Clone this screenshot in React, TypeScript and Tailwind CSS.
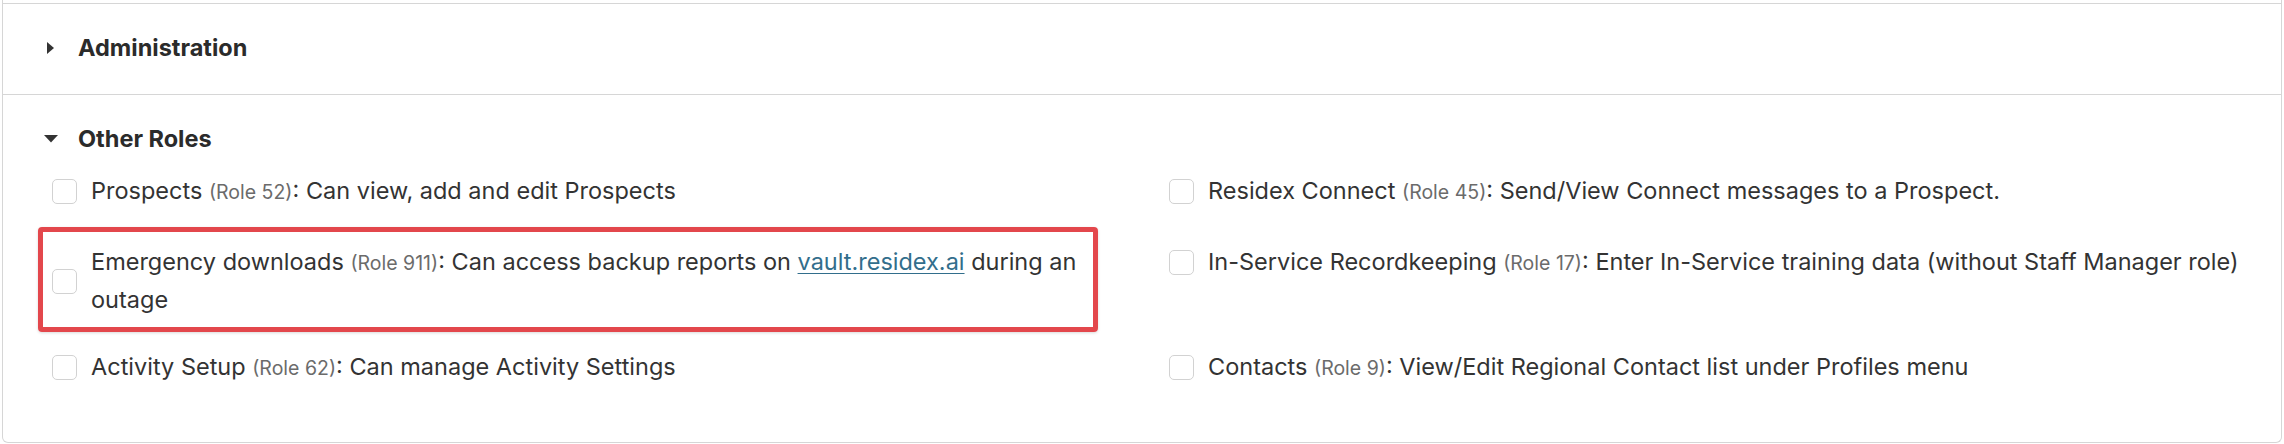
import React from 'react';

type Role = {
  name: string;
  role: number;
  desc: React.ReactNode;
  highlight?: boolean;
};

const left: Role[] = [
  { name: 'Prospects', role: 52, desc: 'Can view, add and edit Prospects' },
  {
    name: 'Emergency downloads',
    role: 911,
    highlight: true,
    desc: (
      <>
        Can access backup reports on{' '}
        <a href="#" className="text-[#326e8c] underline underline-offset-[3px] decoration-1">
          vault.residex.ai
        </a>{' '}
        during an outage
      </>
    ),
  },
  { name: 'Activity Setup', role: 62, desc: 'Can manage Activity Settings' },
];

const right: Role[] = [
  { name: 'Residex Connect', role: 45, desc: 'Send/View Connect messages to a Prospect.' },
  {
    name: 'In-Service Recordkeeping',
    role: 17,
    desc: 'Enter In-Service training data (without Staff Manager role)',
  },
  { name: 'Contacts', role: 9, desc: 'View/Edit Regional Contact list under Profiles menu' },
];

function RoleItem({ item }: { item: Role }) {
  return (
    <label className="relative flex items-center gap-[14px]">
      <span className="h-[25px] w-[25px] shrink-0 rounded-[5px] border border-[#d2d2d2] bg-white" />
      <span className="text-[23.5px] leading-[38px] text-[#333333]">
        {item.name}{' '}
        <span className="text-[19.5px] leading-none text-[#6b6b6b]">(Role {item.role})</span>: {item.desc}
      </span>
      {item.highlight && (
        <span className="pointer-events-none absolute -left-[14px] right-[17px] -top-[16px] -bottom-[13px] rounded-[4px] border-[5px] border-[#e3474c] shadow-[0_1px_3px_rgba(0,0,0,0.15)]" />
      )}
    </label>
  );
}

function Caret({ open }: { open: boolean }) {
  return open ? (
    <svg width="14" height="8" viewBox="0 0 14 8" className="shrink-0">
      <path d="M0 0 L14 0 L7 7.5 Z" fill="#333" />
    </svg>
  ) : (
    <svg width="14" height="12" viewBox="0 0 14 12" className="shrink-0">
      <path d="M3 0 L10 6 L3 12 Z" fill="#333" />
    </svg>
  );
}

export default function App() {
  const rows = left.map((l, i) => [l, right[i]]);

  return (
    <div className="min-h-screen bg-white px-[2px]" style={{ fontFamily: 'Inter, "Noto Sans", sans-serif' }}>
      <div className="rounded-b-[6px] border-x border-b border-[#d6d6d6]">
        <div className="h-[3px]" />

        <section className="border-t border-[#d6d6d6] pt-[28px] pb-[30px] pl-[41px]">
          <div className="flex h-[32px] items-center gap-[20px]">
            <Caret open={false} />
            <h2 className="text-[23.5px] font-bold text-[#2b2b2b]">Administration</h2>
          </div>
        </section>

        <section className="border-t border-[#d6d6d6] pt-[28px] pb-[56px]">
          <div className="flex h-[32px] items-center gap-[20px] pl-[41px]">
            <Caret open={true} />
            <h2 className="text-[23.5px] font-bold text-[#2b2b2b]">Other Roles</h2>
          </div>

          <div className="mt-[17px] grid grid-cols-[1063px_1fr] gap-x-[54px] gap-y-[29px] pl-[49px] pr-[20px]">
            {rows.map(([l, r], i) => (
              <React.Fragment key={l.role}>
                <div className={i === 1 ? 'pt-[4px]' : ''}>
                  <RoleItem item={l} />
                </div>
                <div className={i === 1 ? 'pt-[4px]' : ''}>
                  <RoleItem item={r} />
                </div>
              </React.Fragment>
            ))}
          </div>
        </section>
      </div>
    </div>
  );
}
